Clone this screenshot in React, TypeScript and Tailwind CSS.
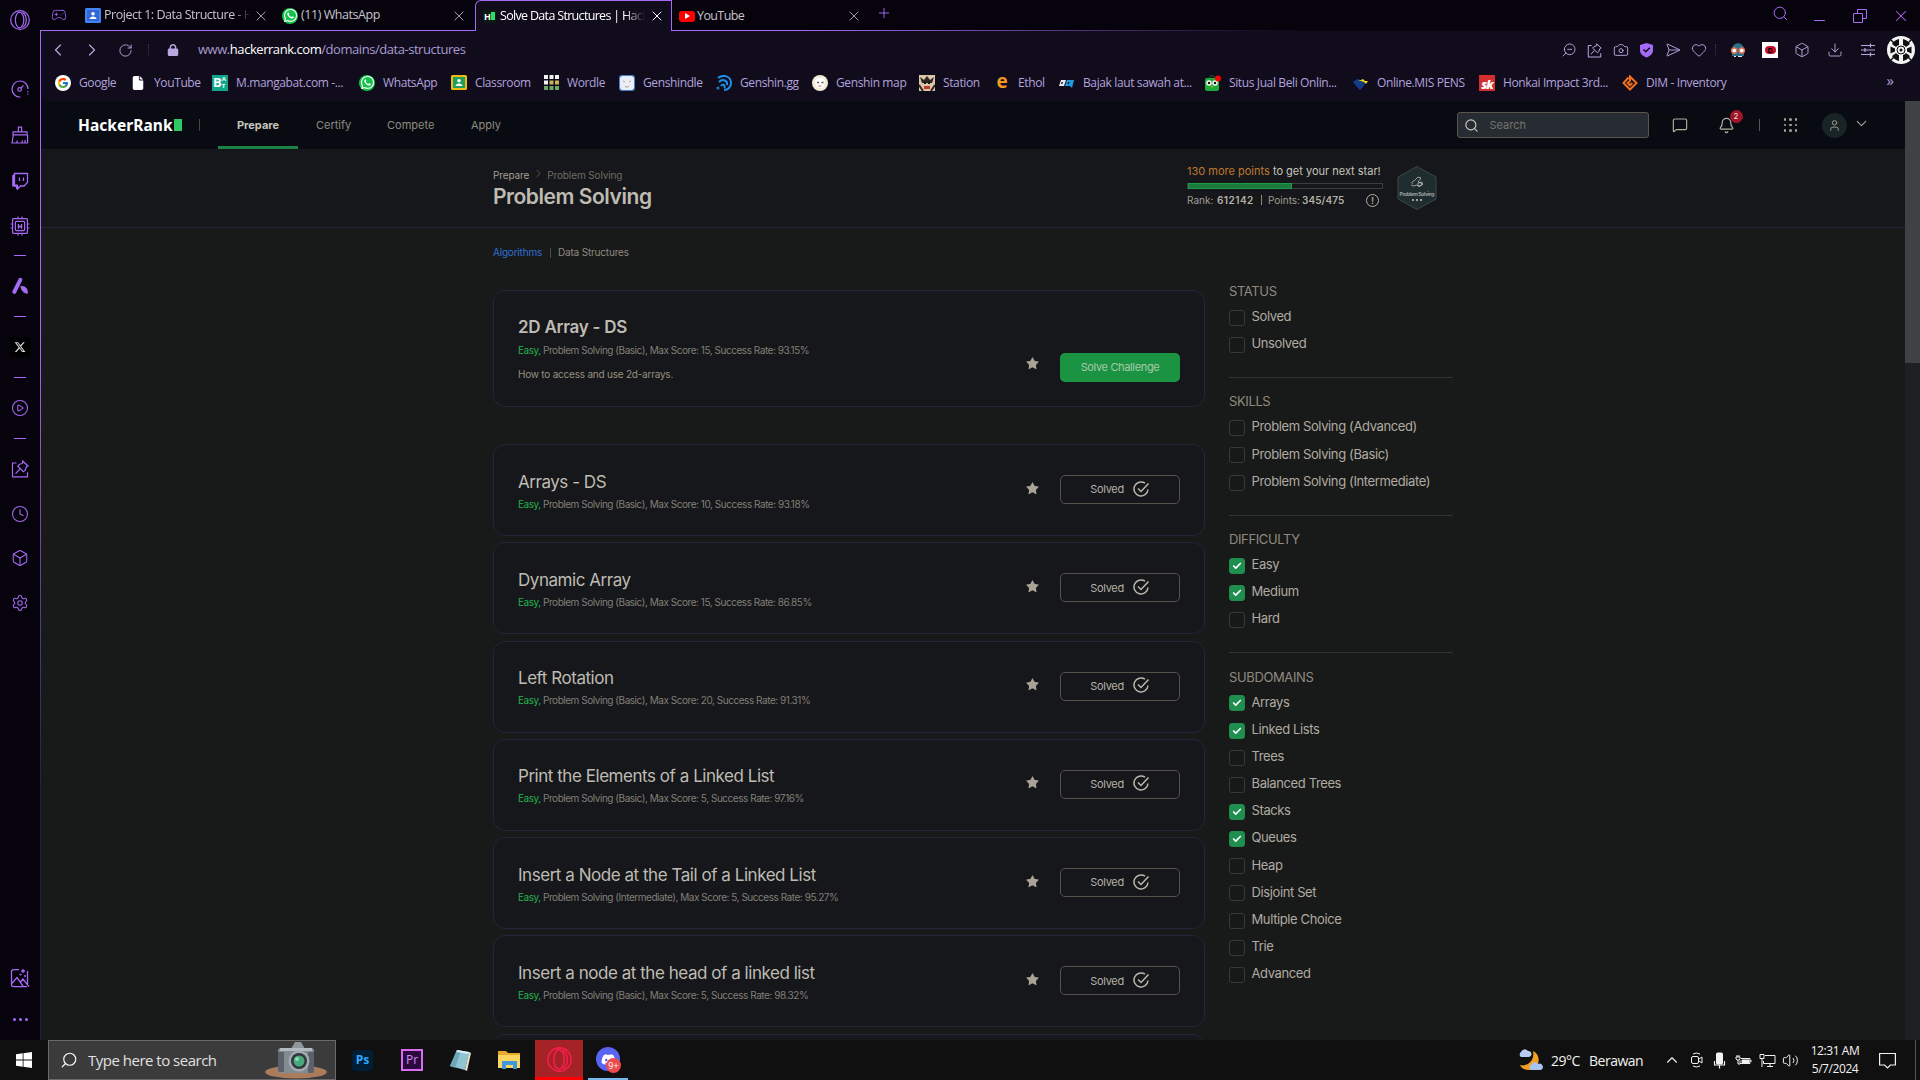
import React from "react";
import {
  Box, Camera, Check, ChevronDown, ChevronLeft, ChevronRight, ChevronUp, Clock, Download, Heart,
  MessageSquare, Minus, Plus, RotateCw, Search, SendHorizontal, Settings, Star, X, Bell, User,
  CirclePlay, Gamepad2, Volume2, ZoomOut,
} from "lucide-react";
import { FcGoogle } from "react-icons/fc";
import { FaDiscord, FaWhatsapp, FaFile, FaXTwitter, FaLock } from "react-icons/fa6";

const P = "#a56bf5";

function OperaRing({ size = 20, color = P }: { size?: number; color?: string }) {
  return (
    <svg width={size} height={size} viewBox="0 0 20 20" fill="none" stroke={color} strokeWidth="1.2">
      <circle cx="10" cy="10" r="9.3" />
      <ellipse cx="9.600" cy="10" rx="4.2" ry="7.8" />
      <path d="M12.5 2.600c5 2.800 5 12 0 14.800" />
    </svg>
  );
}

function Gauge() {
  return (
    <svg width="18" height="18" viewBox="0 0 18 18" fill="none" stroke={P} strokeWidth="1.2">
      <path d="M9.5 17A8 8 0 1 1 17 9" />
      <circle cx="8.6" cy="9.4" r="1.8" />
      <path d="M10 8l2.4-2.6" />
      <path d="M16.8 11v4" strokeDasharray="1.2 1.2" />
    </svg>
  );
}
function Brush() {
  return (
    <svg width="18" height="18" viewBox="0 0 18 18" fill="none" stroke={P} strokeWidth="1.2">
      <path d="M7.4 5.6V1.2h3.2v4.4M2 5.8h14v3H2zM2.4 9L1 17h15.6V9M6 17v-2.4M11 17l.5-2.6M14 17v-3" />
    </svg>
  );
}
function TwitchMark() {
  return (
    <svg width="18" height="18" viewBox="0 0 18 18" fill="none" stroke={P} strokeWidth="1.300">
      <path d="M3.500 1.500h13v9l-3.500 3.500H9.500L6.500 17v-3h-3z" />
      <path d="M1.200 3.500l2.300-2v11h3.500v4.500H5v-2.500H1.200z" fill={P} stroke="none" />
      <path d="M8.500 5.500v3.500M12.500 5.500v3.500" />
    </svg>
  );
}
function Chip() {
  return (
    <svg width="20" height="20" viewBox="0 0 20 20" fill="none" stroke={P} strokeWidth="1.2">
      <rect x="2.6" y="2.6" width="14.8" height="14.8" rx="1" />
      <rect x="5.4" y="5.4" width="9.2" height="9.2" rx="1" />
      <path d="M8.4 8v4l1.6-2 1.6 2V8M8 2.4V.6M12 2.4V.6M2.4 8H.6M2.4 12H.6M17.6 8h1.8M17.6 12h1.8M8 17.6v1.8M12 17.6v1.8" />
    </svg>
  );
}
function Lambda() {
  return (
    <svg width="18" height="18" viewBox="0 0 18 18" fill="none" stroke={P} strokeLinecap="round">
      <path d="M9.300 2.800L3.300 14.800" strokeWidth="4" />
      <path d="M9.800 9.400c4.200-1 7.400 2.600 6.600 7-3.800-.4-6.200-3-6.600-7z" fill={P} strokeWidth=".6" />
    </svg>
  );
}
function PinBoard({ size = 18, color = P }: { size?: number; color?: string }) {
  return (
    <svg width={size} height={size} viewBox="0 0 18 18" fill="none" stroke={color} strokeWidth="1.2">
      <path d="M5.500 3H1.500v13.800h15v-4.600" />
      <path d="M11.600 1l5.400 5-1.600.8-1.200 3.400-1.800 1.400-5.600-5.400 1.500-1.700 3.300-1.300zM9 8.800L4.600 13.600" />
    </svg>
  );
}
function ImageSpark() {
  return (
    <svg width="20" height="20" viewBox="0 0 20 20" fill="none" stroke={P} strokeWidth="1.300">
      <path d="M9 1.600H3.500a2 2 0 0 0-2 2v13a2 2 0 0 0 2 2h13.500M1.800 15.500L7 9.600l6 8.600M10.500 14l2.500-3 6 7.600M13 1v4M11 3h4M17.500 3v13M9.500 6.500h2M14 8h2" />
    </svg>
  );
}

const Dash = () => <span className="h-px w-3 bg-[#a56bf5]" />;
const lp = { size: 18, color: P, strokeWidth: 1.4 };

const rail: [string, React.ReactNode][] = [
  ["h-[46px]", <Gauge />],
  ["h-[46px]", <Brush />],
  ["h-[45px]", <TwitchMark />],
  ["h-[46px]", <Chip />],
  ["h-[13px]", <Dash />],
  ["h-[48px]", <Lambda />],
  ["h-[13px]", <Dash />],
  ["h-[48px]", <span className="flex size-5 items-center justify-center rounded bg-black"><FaXTwitter size={12} color="#ddd" /></span>],
  ["h-[13px]", <Dash />],
  ["h-[47px]", <CirclePlay {...lp} />],
  ["h-[14px]", <Dash />],
  ["h-[47px]", <PinBoard />],
  ["h-[44px]", <Clock {...lp} />],
  ["h-[44px]", <Box {...lp} />],
  ["h-[46px]", <Settings {...lp} />],
];

function Sidebar() {
  return (
    <aside className="flex w-10 shrink-0 flex-col items-center bg-[#06030c]">
      <div className="mb-[26px] flex h-10 items-center"><OperaRing /></div>
      {rail.map(([h, icon], i) => (
        <div key={i} className={`flex items-center justify-center ${h}`}>{icon}</div>
      ))}
      <div className="flex-1" />
      <div className="mb-[30px]"><ImageSpark /></div>
      <div className="mb-[19px] flex gap-[3px]">
        <i className="size-[3px] rounded-full bg-[#a56bf5]" />
        <i className="size-[3px] rounded-full bg-[#a56bf5]" />
        <i className="size-[3px] rounded-full bg-[#a56bf5]" />
      </div>
    </aside>
  );
}

function WhatsAppIcon() {
  return (
    <span className="flex size-4 items-center justify-center rounded-full bg-[#14c24b]">
      <FaWhatsapp size={15} color="#fff" />
    </span>
  );
}
function PersonTile({ outer, inner }: { outer: string; inner: string }) {
  return (
    <svg width="16" height="15" viewBox="0 0 16 15">
      <rect width="16" height="15" rx="1.500" fill={outer} />
      <rect x="2" y="2" width="12" height="11" fill={inner} />
      <circle cx="8" cy="5.800" r="1.800" fill="#fff" />
      <path d="M4.500 11c0-3.400 7-3.400 7 0z" fill="#fff" />
    </svg>
  );
}

function Tab({ icon, title, w, tw }: { icon: React.ReactNode; title: string; w: string; tw: string }) {
  return (
    <div className={`flex h-[31px] items-center border-b border-[#a56bf5] pt-px ${w}`}>
      {icon}
      <span className={`ml-[3px] overflow-hidden whitespace-nowrap text-[12.500px] text-[#c6c3cc] ${tw}`}>{title}</span>
      <X size={16} strokeWidth={1.300} color="#b9b6c0" className="ml-0.5" />
    </div>
  );
}

function TabBar() {
  return (
    <div className="flex h-[31px] bg-[#06030c]">
      <div className="flex w-[45px] items-center border-b border-[#a56bf5] pb-px pl-[11px]">
        <Gamepad2 size={16} strokeWidth={1.300} color={P} />
      </div>
      <Tab icon={<PersonTile outer="#4285f4" inner="#3367d6" />} title="Project 1: Data Structure - H" w="w-[197px]" tw="w-[147px] tracking-[-0.480px] [mask-image:linear-gradient(90deg,#000_88%,transparent)]" />
      <Tab icon={<WhatsAppIcon />} title="(11) WhatsApp" w="w-[193px]" tw="w-[148px] tracking-[-0.450px]" />
      <div className="flex w-[197px] items-center rounded-tl-[6px] border-l border-r border-t border-[#a56bf5] bg-[#100c1c] pl-[7px]">
        <span className="flex size-[13px] items-center justify-center bg-[#0b1a12] text-[9px] font-bold leading-none text-white">H<i className="h-2 w-1 bg-[#1fe26a]" /></span>
        <span className="ml-1 w-[145px] overflow-hidden whitespace-nowrap text-[12.500px] tracking-[-0.680px] text-white [mask-image:linear-gradient(90deg,#000_86%,transparent)]">Solve Data Structures | Hack</span>
        <X size={16} strokeWidth={1.500} color="#fff" className="ml-[4px]" />
      </div>
      <div className="flex h-[31px] w-[640px] items-center border-b pl-[7px] pt-0.5 [border-image:linear-gradient(90deg,#a56bf5_20%,transparent)_1] [border-style:none_none_solid_none]">
        <span className="flex h-[11px] w-4 items-center justify-center rounded-[3px] bg-[#f00]">
          <i className="ml-px border-y-[3px] border-l-[5px] border-y-transparent border-l-white" />
        </span>
        <span className="ml-[2px] w-[148px] text-[12.500px] tracking-[-0.600px] text-[#c6c3cc]">YouTube</span>
        <X size={16} strokeWidth={1.300} color="#b9b6c0" className="ml-[1px]" />
        <Plus size={16} strokeWidth={1.400} color={P} className="-mt-1.5 ml-[14px]" />
      </div>
      <div className="flex flex-1 items-center justify-end gap-[24px] pr-[10px] text-[#a56bf5]">
        <Search size={17} strokeWidth={1.400} className="-mr-0.5 -mt-1" />
        <Minus size={17} strokeWidth={1.400} className="mt-[9px]" />
        <svg width="14" height="14" viewBox="0 0 14 14" fill="none" stroke={P} className="mx-px"><path d="M.5 4.500h9v9h-9zM4.500 4V.5h9v9H10" /></svg>
        <X size={18} strokeWidth={1.400} />
      </div>
    </div>
  );
}

function AddressBar() {
  const c = { size: 16, strokeWidth: 1.400, color: "#b9a8e0" };
  return (
    <div className="flex h-[35px] items-center pt-[3px] text-[#b9a8e0]">
      <ChevronLeft size={20} strokeWidth={1.400} className="ml-[7px]" />
      <ChevronRight size={20} strokeWidth={1.400} className="ml-[14px]" />
      <RotateCw size={15} strokeWidth={1.500} className="ml-[16px]" />
      <span className="ml-[15px] h-3 border-l border-dotted border-[#3a2f5a]" />
      <FaLock size={12} className="ml-[18px]" />
      <span className="ml-[19px] text-[13px] tracking-[-0.450px] text-[#a89bd0]">
        www.<b className="font-normal text-white">hackerrank.com</b>/domains/data-structures
      </span>
      <div className="ml-auto flex items-center pr-[5px]">
        <ZoomOut {...c} className="mr-[10px] -scale-x-100" />
        <PinBoard size={15} color="#b9a8e0" />
        <Camera {...c} className="ml-[11px] mr-[10px]" />
        <svg width="15" height="16" viewBox="0 0 15 16"><path d="M7.500 1L14 3v5c0 4-3 6-6.500 7.500C4 14 1 12 1 8V3z" fill="#a56bf5" /><path d="M4.500 7.500l2.300 2.300 4-4" fill="none" stroke="#100c1c" strokeWidth="1.500" /></svg>
        <SendHorizontal {...c} className="ml-[11px] mr-[10px]" />
        <Heart {...c} />
        <span className="mx-[8px] h-3 border-l border-dotted border-[#3a2f5a]" />
        <svg width="16" height="16" viewBox="0 0 16 16" className="ml-[6px] mr-4"><path d="M2 8C2-1 14-1 14 8v6H2z" fill="#2f6f86" /><circle cx="4.200" cy="8.500" r="2.600" fill="#fff" stroke="#e07058" strokeWidth="1.500" /><circle cx="11.800" cy="8.500" r="2.600" fill="#fff" stroke="#e07058" strokeWidth="1.500" /><path d="M4 14.500h2M8 14.500h4" stroke="#e8e8e8" /></svg>
        <span className="mr-[16px] flex size-4 items-center justify-center bg-white"><i className="flex h-2 w-[11px] items-center justify-center rounded-full bg-[#c8102e] text-[7px] font-bold not-italic leading-none text-black">D</i></span>
        <Box {...c} className="mr-[17px]" />
        <Download {...c} className="mr-[18px]" />
        <svg width="14" height="14" viewBox="0 0 14 14" fill="none" stroke="#b9a8e0" strokeWidth="1.200" className="mr-[12px]"><path d="M0 2.500h14M0 7h14M0 11.500h14M9.500.5v4M4 5v4M9.500 9.500v4" /></svg>
        <svg width="28" height="28" viewBox="0 0 28 28"><circle cx="14" cy="14" r="14" fill="#f4f4f4" /><path d="M5 8A11 11 0 0 1 12 3v6a5 5 0 0 0-3 2zM16 3a11 11 0 0 1 7 5l-4 3a5 5 0 0 0-3-2zM23 20a11 11 0 0 1-7 5v-6a5 5 0 0 0 3-2zM12 25a11 11 0 0 1-7-5l4-3a5 5 0 0 0 3 2zM3.500 10.500l4.500 2v3l-4.500 2zM24.500 10.500l-4.500 2v3l4.500 2z" fill="#111" /><path d="M4 4l4 4M24 4l-4 4M4 24l4-4M24 24l-4-4" stroke="#111" strokeWidth="1.500" /><circle cx="14" cy="14" r="4" fill="#eee" stroke="#111" /><circle cx="14" cy="14" r="1.500" fill="#111" /></svg>
      </div>
    </div>
  );
}

const marks: [React.ReactNode, string, string][] = [
  [<span className="flex size-4 items-center justify-center rounded-full bg-white"><FcGoogle size={12} /></span>, "Google", "w-[38px]"],
  [<FaFile size={14} color="#fff" />, "YouTube", "w-[45px]"],
  [<span className="flex size-4 items-center bg-[#11a68c] pl-px text-[13px] font-bold leading-none text-white">B<i className="flex flex-col text-[6px] not-italic leading-[7px]"><span>A</span><span>T</span></i></span>, "M.mangabat.com -...", "w-[110px]"],
  [<WhatsAppIcon />, "WhatsApp", "w-[55px]"],
  [<PersonTile outer="#f4b912" inner="#1e9e5a" />, "Classroom", "w-[55px]"],
  [<svg width="15" height="15" viewBox="0 0 15 15"><path d="M0 0h4v4H0zM5.500 0h4v4h-4zM11 0h4v4h-4zM0 5.500h4v4H0z" fill="#f2f2f2" /><path d="M5.500 5.500h4v4h-4zM11 5.500h4v4h-4z" fill="#c9b458" /><path d="M0 11h4v4H0zM5.500 11h4v4h-4zM11 11h4v4h-4z" fill="#6aaa64" /></svg>, "Wordle", "w-[39px]"],
  [<svg width="16" height="16" viewBox="0 0 16 16"><rect width="16" height="16" rx="3" fill="#4a7cc8" /><rect x="1" y="1" width="14" height="14" rx="3" fill="#e9eefb" /><path d="M4 6l2 1M12 6l-2 1M6 11c1 1.500 3 1.500 4 0" stroke="#c89a70" fill="none" /></svg>, "Genshindle", "w-[60px]"],
  [<svg width="16" height="16" viewBox="0 0 16 16" fill="none" stroke="#1e90e8" strokeWidth="2"><path d="M2 3C7-1 15 1 15 8c0 4-3 7-7 7" /><path d="M3 7c4-4 9-1 8 3M5 11c2-3 5 0 3 2" /><circle cx="2" cy="13" r=".5" /></svg>, "Genshin.gg", "w-[59px]"],
  [<svg width="16" height="16" viewBox="0 0 16 16"><circle cx="8" cy="8" r="8" fill="#f3ead8" /><path d="M3 5c2-3 8-3 10 0l-1 6c-2 3-6 3-8 0z" fill="#fff" /><path d="M5 7.500h2M9.500 7.500h2" stroke="#65524a" strokeWidth="1.500" /><path d="M6.500 11h3" stroke="#d06050" /></svg>, "Genshin map", "w-[70px]"],
  [<svg width="16" height="16" viewBox="0 0 16 16"><rect width="16" height="16" fill="#d9c7a8" /><path d="M1 2l4 3 3-4 3 4 4-3-2 6H3z" fill="#2c2522" /><path d="M5 8h2M9 8h2" stroke="#111" strokeWidth="2" /><path d="M5 11h6v3H5z" fill="#c23a2c" /><path d="M0 10l4 6M16 10l-4 6" stroke="#2c2522" strokeWidth="2" /></svg>, "Station", "w-[38px]"],
  [<span className="flex size-4 items-center justify-center text-[19px] font-bold leading-none text-[#f39a1f]"><span className="-mt-0.5">e</span></span>, "Ethol", "w-[28px]"],
  [<svg width="16" height="16" viewBox="0 0 16 16"><path d="M0 11l2-6h5l-2 6z" fill="#e8e8ee" /><path d="M6 11l2-6h7l-2 8-2-2z" fill="#1e9be0" /><path d="M2.500 9l1-2M9 9l1-2" stroke="#100c1c" strokeWidth="1.300" /></svg>, "Bajak laut sawah at...", "w-[109px]"],
  [<svg width="16" height="16" viewBox="0 0 16 16"><path d="M4 3c1-3 5-3 6 0" fill="none" stroke="#17702a" /><rect x="0" y="3" width="14" height="13" rx="2" fill="#1fa83c" /><circle cx="4" cy="8" r="2.700" fill="#fff" /><circle cx="10" cy="8" r="2.700" fill="#fff" /><circle cx="4" cy="8" r="1.300" fill="#111" /><circle cx="10" cy="8" r="1.300" fill="#111" /><path d="M6 11h2l-1 2z" fill="#f5b400" /><circle cx="13" cy="3.500" r="3" fill="#f00" /></svg>, "Situs Jual Beli Onlin...", "w-[111px]"],
  [<svg width="16" height="16" viewBox="0 0 16 16"><path d="M0 7l4-3 4 1 4 3-2 4-3 3-3-3z" fill="#123c86" /><path d="M5 5h3l2-1 2 2 3 0-2 3-2-2z" fill="#f4d90a" /></svg>, "Online.MIS PENS", "w-[89px]"],
  [<span className="flex size-4 items-end justify-center bg-[#d32f2f] text-[12px] font-black italic leading-none tracking-[-1px] text-white">sk</span>, "Honkai Impact 3rd...", "w-[106px]"],
  [<svg width="16" height="16" viewBox="0 0 16 16" fill="none" stroke="#f0701e" strokeWidth="2"><path d="M6.500 2.500L1.500 8 8 14.500 14.500 8 8 1.500v5M8 5.500L5.700 8 8 10.300 10.300 8" /></svg>, "DIM - Inventory", "w-[84px]"],
];

function Bookmarks() {
  return (
    <div className="flex h-[35px] items-center gap-[13px] pb-0.5 pl-[14px]">
      {marks.map(([icon, label, w]) => (
        <div key={label} className="flex shrink-0 items-center">
          <span className="mr-2 flex w-4 justify-center">{icon}</span>
          <span className={`whitespace-nowrap text-[12px] tracking-[-0.380px] text-[#b3a2dc] ${w}`}>{label}</span>
        </div>
      ))}
      <span className="-mt-1 ml-auto mr-[26px] text-[15px] leading-none text-[#b3a2dc]">»</span>
    </div>
  );
}

function SiteHeader() {
  return (
    <header className="flex h-12 shrink-0 items-center bg-[#080c12] text-[11px] text-[#8f8a80]">
      <div className="ml-[37px] flex items-center">
        <span className="w-[96px] whitespace-nowrap font-['Noto_Sans'] text-[15.500px] font-bold leading-5 tracking-[0.050px] text-white">HackerRank</span>
        <i className="h-3 w-2 bg-[#2ec866]" />
      </div>
      <i className="ml-[17px] h-3 w-px bg-[#4a4640]" />
      <div className="ml-[18px] flex h-12 w-20 items-center justify-center border-b-[3px] border-[#1d8045] pt-[3px] font-bold text-[#c8c4bc]">Prepare</div>
      <span className="ml-[18px] w-[71px]">Certify</span>
      <span className="w-[84px]">Compete</span>
      <span>Apply</span>
      <div className="ml-auto flex h-[26px] w-[192px] items-center rounded-[3px] border border-[#5a554c] bg-[#262c32] pl-[6px]">
        <Search size={15} strokeWidth={1.800} color="#d0ccc4" />
        <span className="ml-[11px] text-[#76736d]">Search</span>
      </div>
      <MessageSquare size={16} strokeWidth={1.700} color="#b5aea2" className="ml-[23px]" />
      <div className="relative ml-[30px]">
        <Bell size={17} strokeWidth={1.700} color="#b5aea2" />
        <span className="absolute -top-[7px] left-[12px] flex size-[13px] items-center justify-center rounded-full bg-[#a01529] text-[8px] leading-none text-[#e8e0d8]">2</span>
      </div>
      <i className="ml-[24px] h-3 w-px bg-[#5a554c]" />
      <div className="ml-[24px] grid grid-cols-3 gap-[3px]">
        {Array.from({ length: 9 }, (_, i) => <i key={i} className="size-[2.500px] rounded-full bg-[#a8a298]" />)}
      </div>
      <span className="ml-[25px] flex size-[25px] items-center justify-center rounded-full bg-[#192427]"><User size={13} strokeWidth={1.700} color="#a8a298" /></span>
      <ChevronDown size={17} strokeWidth={1.500} color="#a8a298" className="-mt-1 ml-[6px] mr-[35px]" />
    </header>
  );
}

function Banner() {
  return (
    <div className="flex h-[79px] shrink-0 border-b border-[#25243a] bg-[#15171a]">
      <div className="ml-[452px] pt-[18px]">
        <div className="flex h-4 items-center text-[10px] tracking-[-0.120px] text-[#a39d92]">
          Prepare
          <ChevronRight size={13} strokeWidth={1.200} color="#77736b" className="-mt-1 ml-[3px] mr-[2px]" />
          <span className="text-[#6f6b64]">Problem Solving</span>
        </div>
        <h1 className="mt-px text-[21px] font-semibold leading-[26px] tracking-[-0.450px] text-[#bfbbb3]">Problem Solving</h1>
      </div>
      <div className="ml-auto mr-[13px] w-[196px] pt-[15px]">
        <div className="whitespace-nowrap text-[11px] leading-[14px] text-[#c8c4bc]"><span className="text-[#c07830]">130 more points</span> to get your next star!</div>
        <div className="mt-[5px] h-[6px] border border-[#3c3e3e]"><div className="-mt-px h-[6px] w-[104px] border border-[#1d9a48] bg-[#1a7a3c]" /></div>
        <div className="mt-[3px] flex h-4 items-center whitespace-nowrap text-[10px] text-[#a39d92]">
          <span className="w-[30px]">Rank:</span><b className="w-[44px] font-semibold tracking-[0.450px] text-[#b5b0a6]">612142</b>
          <i className="h-2.5 w-px bg-[#8a857b]" />
          <span className="ml-[6px] w-[34px]">Points:</span><b className="font-semibold tracking-[0.100px] text-[#b5b0a6]">345/475</b>
          <span className="ml-auto mr-1 flex size-[13px] items-center justify-center rounded-full border-[1.500px] border-[#b5b0a6] text-[9px] font-bold leading-none">!</span>
        </div>
      </div>
      <svg width="42" height="46" viewBox="0 0 42 46" className="mr-[467px] mt-4">
        <path d="M21 1.500L40 12v22L21 44.500 2 34V12z" fill="#1f2d31" stroke="#3d4748" />
        <path d="M17 19c-2-1-1-3 1-3l4-4 3 1-3 4 5 2-4 3-2-2-4 1-2-1M22 18l4-1v3l-4 1z" fill="none" stroke="#b8b8b4" strokeWidth=".8" />
        <text x="21" y="30.500" textAnchor="middle" fontSize="5" fontWeight="700" fill="#9ea3a0" textLength="35">Problem Solving</text>
        <path d="M16 35h2M20 35h2M24 35h2" stroke="#9ea3a0" strokeWidth="1.800" />
      </svg>
    </div>
  );
}

function SolvedIcon() {
  return (
    <svg width="17" height="17" viewBox="0 0 17 17" fill="none" stroke="#bcb7ad" strokeWidth="1.500">
      <path d="M12 2.200A7 7 0 1 0 15 8.500" />
      <path d="M5 7.500l3 3 7.500-8" />
    </svg>
  );
}

type Row = { title: string; skill: string; score: number; rate: string };
const rows: Row[] = [
  { title: "Arrays - DS", skill: "Basic", score: 10, rate: "93.18" },
  { title: "Dynamic Array", skill: "Basic", score: 15, rate: "86.85" },
  { title: "Left Rotation", skill: "Basic", score: 20, rate: "91.31" },
  { title: "Print the Elements of a Linked List", skill: "Basic", score: 5, rate: "97.16" },
  { title: "Insert a Node at the Tail of a Linked List", skill: "Intermediate", score: 5, rate: "95.27" },
  { title: "Insert a node at the head of a linked list", skill: "Basic", score: 5, rate: "98.32" },
];

const cardShell = "rounded-xl border border-[#25243a] bg-[#15171a]";

function Meta({ skill, score, rate }: Omit<Row, "title">) {
  return (
    <p className="whitespace-nowrap text-[10px] leading-[14px] tracking-[-0.460px] text-[#837f78]">
      <span className="text-[#25b04f]">Easy,</span> Problem Solving ({skill}), Max Score: {score}, Success Rate: {rate}%
    </p>
  );
}

function Challenge(r: Row) {
  return (
    <div className={`flex h-[92px] shrink-0 pl-6 pr-[24px] ${cardShell}`}>
      <div className="pt-[24.500px]">
        <h2 className="text-[17px] leading-6 tracking-[-0.460px] text-[#bfbbb3]">{r.title}</h2>
        <div className="mt-[3px]"><Meta skill={r.skill} score={r.score} rate={r.rate} /></div>
      </div>
      <Star size={15} fill="#a9a297" strokeWidth={0} className="ml-auto mr-5 mt-[35.500px]" />
      <div className="mt-[30px] flex h-[29px] w-[120px] items-center justify-center gap-[9px] rounded-[5px] border border-[#57524a] text-[11px] tracking-[-0.3px] text-[#b5b0a6]">
        Solved <span className="-mt-px"><SolvedIcon /></span>
      </div>
    </div>
  );
}

const filters: { name: string; items: [string, boolean][] }[] = [
  { name: "STATUS", items: [["Solved", false], ["Unsolved", false]] },
  { name: "SKILLS", items: [["Problem Solving (Advanced)", false], ["Problem Solving (Basic)", false], ["Problem Solving (Intermediate)", false]] },
  { name: "DIFFICULTY", items: [["Easy", true], ["Medium", true], ["Hard", false]] },
  { name: "SUBDOMAINS", items: [["Arrays", true], ["Linked Lists", true], ["Trees", false], ["Balanced Trees", false], ["Stacks", true], ["Queues", true], ["Heap", false], ["Disjoint Set", false], ["Multiple Choice", false], ["Trie", false], ["Advanced", false]] },
];

function Filters() {
  return (
    <div className="w-[224px] pt-[40px] text-[13px] tracking-[-0.380px]">
      {filters.map((f, i) => (
        <section key={f.name} className={i < 3 ? "mb-[13.500px] border-b border-[#303331] pb-[18.500px]" : ""}>
          <h3 className="mb-[3.200px] h-5 leading-5 text-[#8f8a80]">{f.name}</h3>
          {f.items.map(([label, on]) => (
            <label key={label} className="flex h-[27.150px] items-center">
              <span className={`flex size-4 items-center justify-center rounded-[3px] border ${on ? "border-[#1f8a4c] bg-[#1f8f50]" : "border-[#36393a] bg-[#171919]"}`}>
                {on && <Check size={10} strokeWidth={4} color="#fff" />}
              </span>
              <span className="-mt-[2px] ml-[6.500px] text-[#b0aba2]">{label}</span>
            </label>
          ))}
        </section>
      ))}
    </div>
  );
}

function Page() {
  return (
    <main className="flex min-h-0 flex-1 overflow-hidden bg-[#181a19] font-[Inter,sans-serif]">
      <div className="flex min-w-0 flex-1 flex-col overflow-hidden">
        <SiteHeader />
        <Banner />
        <div className="flex min-h-0 flex-1 overflow-hidden pl-[452px]">
          <div className="w-[712px]">
            <div className="flex h-[49px] items-center text-[10px]">
              <span className="w-[57px] tracking-[-0.200px] text-[#2f6fd6]">Algorithms</span>
              <i className="h-2.5 w-px bg-[#4c4b47]" />
              <span className="ml-[7px] tracking-[-0.180px] text-[#8f8a80]">Data Structures</span>
            </div>
            <div className={`mt-[13px] flex h-[117px] pl-6 pr-[24px] ${cardShell}`}>
              <div className="pt-6">
                <h2 className="text-[17px] font-semibold leading-6 tracking-[-0.250px] text-[#bfbbb3]">2D Array - DS</h2>
                <div className="mt-[4px]"><Meta skill="Basic" score={15} rate="93.15" /></div>
                <p className="mt-[10px] text-[10px] leading-[14px] tracking-[-0.220px] text-[#96917f]">How to access and use 2d-arrays.</p>
              </div>
              <Star size={15} fill="#a9a297" strokeWidth={0} className="ml-auto mr-5 mt-[65px]" />
              <div className="mt-[62px] flex h-[29px] w-[120px] items-center justify-center rounded-[5px] bg-[#1a9443] text-[11px] tracking-[-0.350px] text-[#a9c9a9]">Solve Challenge</div>
            </div>
            <div className="mt-[37px] flex flex-col gap-[6.250px]">
              {rows.map((r) => <Challenge key={r.title} {...r} />)}
              <div className={`h-[92px] shrink-0 ${cardShell}`} />
            </div>
          </div>
          <div className="ml-6 pt-[13px]"><Filters /></div>
        </div>
      </div>
      <div className="w-[15px] bg-[#1c2022]"><div className="h-[262px] bg-[#3e4244]" /></div>
    </main>
  );
}

function CameraArt() {
  return (
    <svg width="62" height="38" viewBox="0 0 62 38">
      <ellipse cx="31" cy="31" rx="31" ry="6.500" fill="#a97c5c" />
      <path d="M26 8l4-7h6l4 7z" fill="#8e959b" />
      <rect x="13" y="7" width="36" height="25" rx="3" fill="#828a92" />
      <path d="M13 11h6v20h-4q-2 0-2-3zM43 11h6v18q0 3-2 3h-4z" fill="#59616a" />
      <path d="M15 7h32v3H15z" fill="#b3babf" />
      <circle cx="34" cy="20" r="10.500" fill="#a3abb1" />
      <circle cx="34" cy="20" r="8" fill="#2f373c" />
      <circle cx="34" cy="20" r="5.500" fill="#4aa97c" />
      <circle cx="32" cy="18" r="2" fill="#8fdcb2" />
    </svg>
  );
}

function Taskbar() {
  return (
    <footer className="flex h-10 shrink-0 items-center bg-[#101010] text-[#f2f2f2]">
      <svg width="16" height="16" viewBox="0 0 16 16" fill="#fff" className="ml-4 mr-4"><path d="M0 2.200L6.700 1.300v6.300H0zM7.500 1.200L16 0v7.600H7.500zM0 8.400h6.700v6.300L0 13.800zM7.500 8.400H16V16l-8.500-1.200z" /></svg>
      <div className="flex h-10 w-[288px] items-center border border-[#6b6b6b] bg-[#3b3b3b] pl-[11px] pr-[8px]">
        <Search size={18} strokeWidth={1.600} color="#f5f5f5" className="-scale-x-100" />
        <span className="ml-[10px] text-[15px] tracking-[-0.500px] text-[#e0e0e0]">Type here to search</span>
        <span className="ml-auto"><CameraArt /></span>
      </div>
      <span className="ml-4 flex size-[21px] items-center justify-center rounded bg-[#001e36] text-[12px] font-bold leading-none text-[#31a8ff]">Ps</span>
      <span className="ml-[28px] flex size-[22px] items-center justify-center border-2 border-[#d86bf0] bg-[#2a0a3c] text-[12px] leading-none text-[#d98bff]">Pr</span>
      <svg width="24" height="24" viewBox="0 0 24 24" className="ml-[25px]"><path d="M9 2l12 2-4 18L2 18z" fill="#8fc4d2" /><path d="M9 2l4 .7-6 17-5-1.700z" fill="#6ba7b8" /><path d="M21 4l2 1-4 18-2-1z" fill="#e9e4c8" /><path d="M9 2l12 2-.5 2L8.500 4z" fill="#d8eef4" /></svg>
      <svg width="23" height="20" viewBox="0 0 23 20" className="ml-[26px]"><path d="M0 1h8l2 2h12v3H0z" fill="#e8a92a" /><path d="M0 5h22v13H0z" fill="#fcd462" /><path d="M4 19v-8h15v8h-4v-4H8v4z" fill="#3f97dc" /></svg>
      <div className="ml-[14px] flex h-10 w-12 items-center justify-center border-b-[3px] border-[#f00] bg-[#a52226] pt-[2px]"><OperaRing size={25} color="#fa1e4e" /></div>
      <div className="relative ml-[5px] flex h-10 w-10 items-center justify-center border-b-2 border-[#76b9ed]">
        <span className="flex size-6 items-center justify-center rounded-full bg-[#5865f2]"><FaDiscord size={15} color="#fff" /></span>
        <span className="absolute left-[18px] top-[18px] flex size-[15px] items-center justify-center whitespace-nowrap rounded-full bg-[#ed4b4b] text-[9px] leading-none text-white">9+</span>
      </div>
      <div className="ml-auto flex items-center">
        <svg width="25" height="24" viewBox="0 0 25 24"><path d="M15 3c9 4 7 19-4 19-4 0-8-2-9-5 7 2 15-4 13-14z" fill="#f2a024" /><path d="M3 9a3 3 0 0 1 0-5 4 4 0 0 1 7-1 3 3 0 0 1 1 6z" fill="#b7cdf2" /><path d="M13 22a3 3 0 0 1 0-5 4 4 0 0 1 7-1 3 3 0 0 1 3 6z" fill="#a9c3f0" /></svg>
        <span className="ml-[8px] w-[38px] text-[14px] tracking-[-0.5px]">29°C</span>
        <span className="w-[74px] text-[14px] tracking-[-0.5px]">Berawan</span>
        <ChevronUp size={18} color="#f2f2f2" strokeWidth={1.500} />
        <svg width="14" height="18" viewBox="0 0 14 18" fill="none" stroke="#f2f2f2" className="ml-[9px]"><rect x="1.500" y="5.500" width="7" height="7" rx="1.500" /><path d="M9 8l3-2v6l-3-2M3 3q3-2 7 0M3 15q3 2 7 0" /></svg>
        <svg width="13" height="17" viewBox="0 0 13 17" fill="none" stroke="#f2f2f2" className="ml-[9px]"><rect x="3.500" y="1" width="6" height="11" rx="1" fill="#f2f2f2" /><path d="M1.500 9v4h10V9M6.500 13v3.500" strokeWidth="1.200" /></svg>
        <svg width="17" height="14" viewBox="0 0 17 14" fill="none" stroke="#f2f2f2" className="ml-[9px]"><path d="M1 4h4v2l-1 1H2L1 6zM2 4V2M4 4V2M3 7v4h2M6 5.500h9v5H5v-3M16 7v2" /><path d="M7 7h7v2.500H7z" fill="#f2f2f2" /></svg>
        <svg width="17" height="15" viewBox="0 0 17 15" fill="none" stroke="#f2f2f2" className="ml-[7px]"><path d="M6 2.500h10v8H4.500V8M1 1.500h4v4H1zM3 6v8M8 13.500h6M11 11v2" /></svg>
        <Volume2 size={17} strokeWidth={1.400} className="ml-[6px]" />
        <div className="ml-[7px] w-[58px] text-center text-[12px] leading-[18px] tracking-[-0.420px]">12:31 AM<br />5/7/2024</div>
        <svg width="17" height="17" viewBox="0 0 17 17" fill="none" stroke="#f2f2f2" strokeWidth="1.200" className="ml-[15px] mr-[19px]"><path d="M.6 1.500h15.800v11.500h-5l-2.900 3-2.900-3h-5z" /></svg>
        <i className="mr-1 h-10 w-px bg-[#555]" />
      </div>
    </footer>
  );
}

export default function App() {
  return (
    <div className="flex h-[1080px] w-[1920px] flex-col overflow-hidden bg-[#06030c] font-['Open_Sans','Noto_Sans',sans-serif]">
      <div className="flex min-h-0 flex-1">
        <Sidebar />
        <div className="flex min-w-0 flex-1 flex-col">
          <TabBar />
          <div className="flex min-h-0 flex-1 flex-col border-l border-[#a56bf5] bg-[#100c1c] [border-image:linear-gradient(180deg,#a56bf5_30%,#2a1c48_75%)_1]">
            <AddressBar />
            <Bookmarks />
            <Page />
          </div>
        </div>
      </div>
      <Taskbar />
    </div>
  );
}
